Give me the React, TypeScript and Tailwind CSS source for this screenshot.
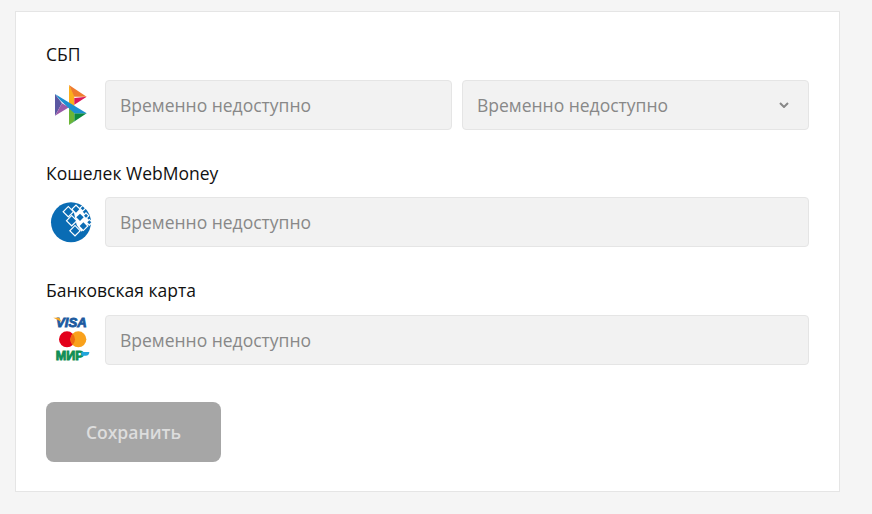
const font = { fontFamily: '"Open Sans", sans-serif' }

function SbpIcon() {
  return (
    <svg viewBox="18 30 147 150" className="w-[49px] h-[50px] shrink-0">
      <polygon points="45,72 45,137 66,100" fill="#5b57a2" />
      <polygon points="45,137 87,112 66,100" fill="#9a5ba8" />
      <polygon points="87,45 87,105 103,112 103,76" fill="#fbb01b" />
      <polygon points="87,45 140,80 103,80" fill="#ef7b2e" />
      <polygon points="103,84 140,80 103,104" fill="#db1a5c" />
      <polygon points="87,112 87,165 103,152 103,122" fill="#6bb536" />
      <polygon points="87,165 140,130 103,130 103,152" fill="#0c8a3e" />
      <polygon points="45,72 140,130 103,130 60,90" fill="#1d8fd1" />
    </svg>
  )
}

const diamond = (x: number, y: number, r: number) =>
  `${x},${y - r} ${x + r},${y} ${x},${y + r} ${x - r},${y}`

function WebMoneyIcon() {
  const cells = [
    [85, 65, 13], [108, 58, 10], [128, 55, 6],
    [95, 92, 13], [120, 82, 11], [138, 77, 6],
    [105, 122, 13], [130, 108, 11], [148, 97, 6],
  ]
  return (
    <svg viewBox="18 21 147 150" className="w-[49px] h-[50px] shrink-0">
      <circle cx="93" cy="97" r="60" fill="#0a6cb4" />
      {cells.map(([x, y, r], i) => (
        <polygon key={i} points={diamond(x, y, r + 5)} fill="#fff" />
      ))}
      <polygon points="100,60 125,60 150,95 125,125 110,105" fill="#fff" />
      {cells.map(([x, y, r], i) => (
        <polygon key={i} points={diamond(x, y, r)} fill="#0a6cb4" />
      ))}
    </svg>
  )
}

function CardsIcon() {
  return (
    <svg viewBox="18 30 147 150" className="w-[49px] h-[50px] shrink-0">
      <text x="48" y="65" fontFamily="Liberation Sans" fontWeight="700" fontStyle="italic" fontSize="39" fill="#1c5a9f" stroke="#1c5a9f" strokeWidth="2.5" textLength="92" lengthAdjust="spacingAndGlyphs">VISA</text>
      <polygon points="40,38 58,38 64,50" fill="#f6a623" />
      <circle cx="81" cy="103" r="24" fill="#e3001b" />
      <circle cx="115" cy="103" r="24" fill="#f9a11b" />
      <path d="M98 86A24 24 0 0 1 98 120A24 24 0 0 1 98 86z" fill="#ef6a10" />
      <text x="47" y="165" fontFamily="Liberation Sans" fontWeight="700" fontSize="36" fill="#0f8f55" stroke="#0f8f55" strokeWidth="2.5" textLength="84" lengthAdjust="spacingAndGlyphs">МИР</text>
      <path d="M124 141h24c0 7-4 11-11 11h-13z" fill="#22a6dc" />
    </svg>
  )
}

function Field() {
  return (
    <div className="h-[50px] flex-1 flex items-center rounded border border-[#e5e5e5] bg-[#f2f2f2] pl-[14px] text-[17.5px] text-[#888888] min-w-0">
      Временно недоступно
    </div>
  )
}

export default function App() {
  return (
    <div className="min-h-[514px] bg-[#f5f5f5] pl-[15px] pr-[32px] pt-[11px]" style={font}>
      <div className="bg-white border border-[#e5e5e5] px-[30px] pt-[30px] h-[481px]">
        <div className="flex flex-col">
          <div className="text-[17.5px] leading-[24px] text-[#111111] mb-[14px]">СБП</div>
          <div className="flex gap-[10px]">
            <SbpIcon />
            <div className="flex-1 grid grid-cols-2 gap-[10px]">
              <Field />
              <div className="h-[50px] flex items-center justify-between rounded border border-[#e5e5e5] bg-[#f2f2f2] pl-[14px] pr-[19px] text-[17.5px] text-[#888888] min-w-0">
                Временно недоступно
                <svg viewBox="0 0 10 6" className="w-[10px] h-[6px]" fill="none" stroke="#888888" strokeWidth="2">
                  <path d="M1 1l4 4 4-4" />
                </svg>
              </div>
            </div>
          </div>

          <div className="text-[17.5px] leading-[24px] text-[#111111] mt-[31px] mb-[12px]">Кошелек WebMoney</div>
          <div className="flex gap-[10px]">
            <WebMoneyIcon />
            <Field />
          </div>

          <div className="text-[17.5px] leading-[24px] text-[#111111] mt-[31px] mb-[13px]">Банковская карта</div>
          <div className="flex gap-[10px]">
            <CardsIcon />
            <Field />
          </div>

          <button className="mt-[37px] w-[175px] h-[60px] rounded-lg bg-[#a6a6a6] text-[17.5px] font-semibold text-[#dddddd]">
            Сохранить
          </button>
        </div>
      </div>
    </div>
  )
}
